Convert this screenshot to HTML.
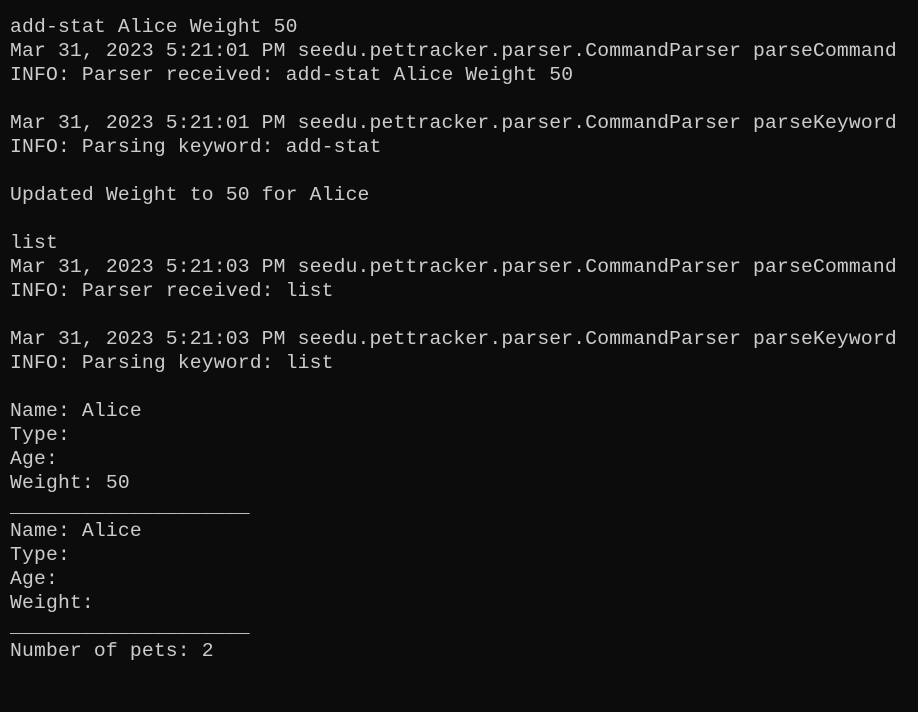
<!DOCTYPE html>
<html><head><meta charset="utf-8"><style>
html,body{margin:0;padding:0;background:#0c0c0c;width:918px;height:712px;overflow:hidden}
pre{margin:0;position:absolute;left:10px;top:15px;font-family:"Liberation Mono",monospace;font-size:19.7px;letter-spacing:0.17px;line-height:24px;color:#cccccc;white-space:pre}
</style></head><body><pre>add-stat Alice Weight 50
Mar 31, 2023 5:21:01 PM seedu.pettracker.parser.CommandParser parseCommand
INFO: Parser received: add-stat Alice Weight 50

Mar 31, 2023 5:21:01 PM seedu.pettracker.parser.CommandParser parseKeyword
INFO: Parsing keyword: add-stat

Updated Weight to 50 for Alice

list
Mar 31, 2023 5:21:03 PM seedu.pettracker.parser.CommandParser parseCommand
INFO: Parser received: list

Mar 31, 2023 5:21:03 PM seedu.pettracker.parser.CommandParser parseKeyword
INFO: Parsing keyword: list

Name: Alice
Type:
Age:
Weight: 50
____________________
Name: Alice
Type:
Age:
Weight:
____________________
Number of pets: 2</pre></body></html>
